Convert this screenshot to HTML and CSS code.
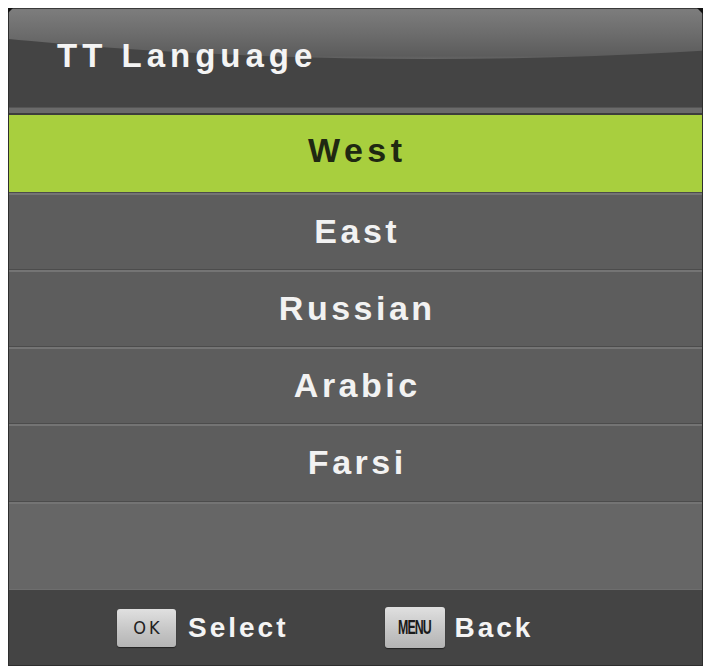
FILE: index.html
```html
<!DOCTYPE html>
<html>
<head>
<meta charset="utf-8">
<link rel="stylesheet" href="styles.css">
</head>
<body>
<div class="panel">
  <div class="header">
    <div class="title">TT Language</div>
  </div>
  <div class="strip"></div>
  <div class="list">
    <div class="row selected">West</div>
    <div class="row">East</div>
    <div class="row">Russian</div>
    <div class="row">Arabic</div>
    <div class="row last">Farsi</div>
    <div class="row empty"></div>
  </div>
  <div class="footer">
    <div class="hint">
      <span class="key key-ok">OK</span>
      <span class="label">Select</span>
    </div>
    <div class="hint hint-back">
      <span class="key key-menu"><span class="menu-txt">MENU</span></span>
      <span class="label">Back</span>
    </div>
  </div>
</div>
</body>
</html>
```

FILE: styles.css
```css
html, body {
  margin: 0;
  padding: 0;
  background: #ffffff;
}

body {
  padding: 8px 6px 0 8px;
  font-family: "Liberation Sans", Arial, sans-serif;
}

.panel {
  position: relative;
  width: 695px;
  height: 658px;
  box-sizing: border-box;
  border-left: 1px solid #2e2e2e;
  border-right: 1px solid #2e2e2e;
  border-top: 1px solid #3a3a3a;
  border-bottom: 1px solid #2e2e2e;
  display: flex;
  flex-direction: column;
  background: #5e5e5e;
}

.panel::before,
.panel::after {
  content: "";
  position: absolute;
  top: -1px;
  width: 0;
  height: 0;
  z-index: 2;
}

.panel::before {
  left: -1px;
  border-top: 5px solid #111;
  border-right: 5px solid transparent;
}

.panel::after {
  right: -1px;
  border-top: 6px solid #111;
  border-left: 6px solid transparent;
}

.header {
  position: relative;
  height: 98px;
  background: #444444;
  overflow: hidden;
  display: flex;
  align-items: center;
  flex: none;
}

.header::before {
  content: "";
  position: absolute;
  left: -430px;
  top: -258px;
  width: 1700px;
  height: 308px;
  border-radius: 50%;
  background: linear-gradient(to bottom, #5a5a5a 80%, #7c7c7c 84.2%, #6c6c6c 92%, #5c5c5c 99%, #666 100%);
}

.title {
  position: relative;
  padding-left: 48px;
  margin-top: -4px;
  font-size: 33px;
  font-weight: bold;
  letter-spacing: 5px;
  color: #f4f4f4;
}

.strip {
  flex: none;
  height: 8px;
  box-sizing: border-box;
  background: #6a6a6a;
  border-top: 1px solid #555;
  border-bottom: 2px solid #3c3c3c;
}

.list {
  display: flex;
  flex-direction: column;
  flex: none;
}

.row {
  height: 77px;
  box-sizing: border-box;
  display: flex;
  align-items: center;
  justify-content: center;
  padding-left: 3.5px;
  font-size: 34px;
  font-weight: bold;
  letter-spacing: 3.5px;
  color: #f2f2f2;
  background: #5d5d5d;
  border-top: 1px solid #4c4c4c;
  box-shadow: inset 0 2px 0 #747474;
}

.row.selected {
  background: #a8cf3e;
  color: #1f2812;
  border-top: none;
  box-shadow: none;
  padding-bottom: 6px;
  letter-spacing: 4.5px;
}

.row.last {
  height: 78px;
}

.row.empty {
  height: 88px;
  background: #666666;
}

.footer {
  flex: 1;
  background: #444444;
  border-top: 1px solid #6e6e6e;
  display: flex;
  align-items: center;
  padding-left: 108px;
  gap: 96px;
}

.hint {
  display: flex;
  align-items: center;
  gap: 12px;
}

.hint-back {
  gap: 10px;
}

.key {
  display: flex;
  align-items: center;
  justify-content: center;
  box-sizing: border-box;
  border-radius: 3px;
  background: linear-gradient(to bottom, #e0e0e0, #c4c4c4 60%, #b4b4b4);
  color: #2a2a2a;
  box-shadow: 0 1px 1px rgba(0,0,0,0.5);
}

.key-ok {
  width: 59px;
  height: 38px;
  font-family: "DejaVu Sans Condensed", "DejaVu Sans", sans-serif;
  font-size: 18px;
  letter-spacing: 3px;
  padding-left: 3px;
  color: #222;
}

.key-menu {
  width: 60px;
  height: 41px;
  overflow: hidden;
}

.menu-txt {
  display: inline-block;
  font-family: "Liberation Sans", Arial, sans-serif;
  font-size: 20px;
  font-weight: bold;
  letter-spacing: -1.5px;
  transform: scaleX(0.62);
  color: #1a1a1a;
}

.label {
  font-size: 28px;
  font-weight: bold;
  letter-spacing: 3px;
  color: #f4f4f4;
}
```
